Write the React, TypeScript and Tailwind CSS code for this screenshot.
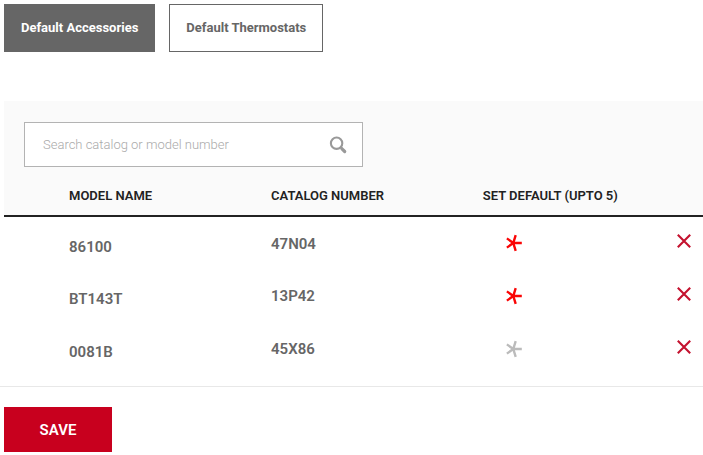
import React, { useState } from 'react';

type CatalogItem = {
  model: string;
  catalog: string;
  isDefault: boolean;
};

const initialItems: CatalogItem[] = [
  { model: '86100', catalog: '47N04', isDefault: true },
  { model: 'BT143T', catalog: '13P42', isDefault: true },
  { model: '0081B', catalog: '45X86', isDefault: false },
];

const SearchIcon = () => (
  <svg width="18" height="18" viewBox="0 0 18 18" fill="none" stroke="#999999" aria-hidden="true">
    <circle cx="7.6" cy="7.2" r="5.7" strokeWidth="2.1" />
    <path d="M11.6 11.2l1.6 1.6" strokeWidth="2" />
    <path d="M13 12.8l2.7 2.7" strokeWidth="3.2" strokeLinecap="round" />
  </svg>
);

const AsteriskIcon = () => (
  <svg width="18" height="18" viewBox="0 0 18 18" fill="none" stroke="currentColor" strokeWidth="2.4" aria-hidden="true">
    <path d="M8.3 9H16.8M8.3 9l2.4-7.8M8.3 9l2.4 7.8M8.3 9L1.9 4.4M8.3 9l-6.4 4.6" />
  </svg>
);

const CloseIcon = () => (
  <svg width="14" height="14" viewBox="0 0 14 14" fill="none" stroke="#c4122f" strokeWidth="2.1" aria-hidden="true">
    <path d="M0.8 0.8l12.4 12.4M13.2 0.8L0.8 13.2" />
  </svg>
);

const App: React.FC = () => {
  const [tab, setTab] = useState<'accessories' | 'thermostats'>('accessories');
  const [query, setQuery] = useState('');
  const [items, setItems] = useState(initialItems);

  const needle = query.trim().toLowerCase();
  const visible = items.filter(
    (item) => item.model.toLowerCase().includes(needle) || item.catalog.toLowerCase().includes(needle),
  );

  const toggleDefault = (model: string) => {
    setItems(items.map((item) => (item.model === model ? { ...item, isDefault: !item.isDefault } : item)));
  };

  const tabClass = (active: boolean) =>
    active
      ? 'h-12 px-4 border border-[#666666] bg-[#666666] text-white'
      : 'h-12 px-4 border border-[#666666] bg-white text-[#666666]';

  return (
    <div className="bg-white pt-1 font-['Roboto','Noto_Sans',sans-serif] text-[#666666]">
      {/* Tabs */}
      <div className="flex gap-[14px] pl-1 text-[13px] font-bold">
        <button className={tabClass(tab === 'accessories')} onClick={() => setTab('accessories')}>
          Default Accessories
        </button>
        <button className={tabClass(tab === 'thermostats')} onClick={() => setTab('thermostats')}>
          Default Thermostats
        </button>
      </div>

      <div className="mt-[49px] ml-1">
        {/* Search */}
        <div className="bg-[#fafafa] px-5 pt-[21px] pb-[9px]">
          <label className="flex h-[45px] max-w-[339px] items-center border border-[#b3b3b3] bg-white pr-[15px] pl-[18px]">
            <input
              type="text"
              value={query}
              onChange={(e) => setQuery(e.target.value)}
              placeholder="Search catalog or model number"
              aria-label="Search catalog or model number"
              className="min-w-0 flex-1 text-[13px] font-light outline-none placeholder:text-[#aaaaaa]"
            />
            <SearchIcon />
          </label>
        </div>

        {/* Items */}
        <table className="w-full table-fixed text-left">
          <thead className="border-b-2 border-[#222222] bg-[#fafafa] text-[13px] text-[#222222]">
            <tr className="h-10">
              <th className="w-[38.2%] pl-[65px] font-semibold">MODEL NAME</th>
              <th className="w-[30.3%] font-semibold">CATALOG NUMBER</th>
              <th className="font-semibold">SET DEFAULT (UPTO 5)</th>
              <th className="w-12" aria-label="Remove" />
            </tr>
          </thead>
          <tbody className="text-[15px] font-semibold">
            {visible.map((item) => (
              <tr key={item.model} className="h-[53px]">
                <td className="pt-2 pl-[65px]">{item.model}</td>
                <td className="pt-[2px]">{item.catalog}</td>
                <td className="pl-[22px]">
                  <button
                    onClick={() => toggleDefault(item.model)}
                    aria-label="Set default"
                    aria-pressed={item.isDefault}
                    className={item.isDefault ? 'block text-[#fa0505]' : 'block text-[#bbbbbb]'}
                  >
                    <AsteriskIcon />
                  </button>
                </td>
                <td className="pr-3 pb-1">
                  <button
                    onClick={() => setItems(items.filter((other) => other !== item))}
                    aria-label="Remove"
                    className="ml-auto block"
                  >
                    <CloseIcon />
                  </button>
                </td>
              </tr>
            ))}
          </tbody>
        </table>
      </div>

      {/* Footer */}
      <div className="mt-[11px] border-t border-[#e8e8e8] pt-5 pl-1">
        <button className="h-[45px] min-w-[108px] bg-[#c8001e] px-[35px] pt-[2px] text-[15px] font-semibold text-white">
          SAVE
        </button>
      </div>
    </div>
  );
};

export default App;
